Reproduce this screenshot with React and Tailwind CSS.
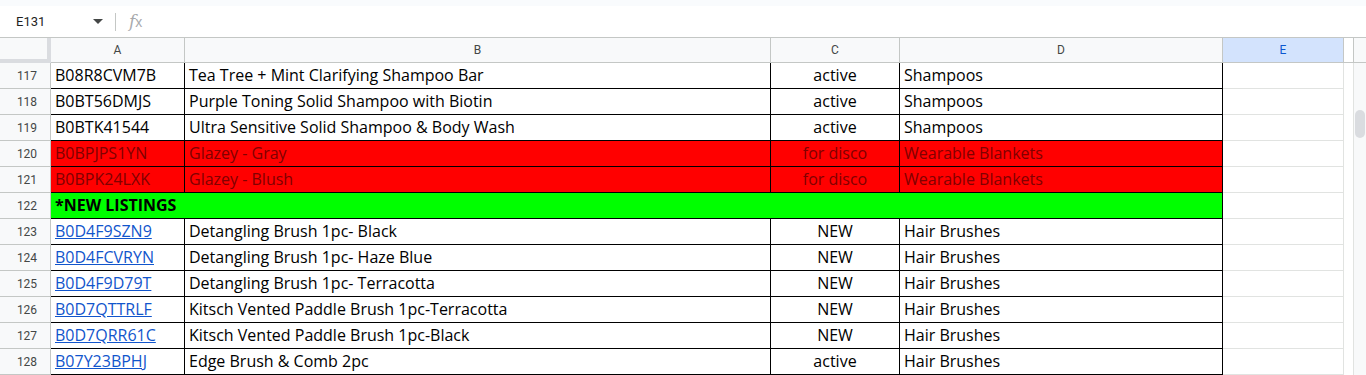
import React from "react";

const rows = [
  { n: 117, a: "B08R8CVM7B", b: "Tea Tree + Mint Clarifying Shampoo Bar", c: "active", d: "Shampoos" },
  { n: 118, a: "B0BT56DMJS", b: "Purple Toning Solid Shampoo with Biotin", c: "active", d: "Shampoos" },
  { n: 119, a: "B0BTK41544", b: "Ultra Sensitive Solid Shampoo & Body Wash", c: "active", d: "Shampoos" },
  { n: 120, a: "B0BPJPS1YN", b: "Glazey - Gray", c: "for disco", d: "Wearable Blankets", red: true },
  { n: 121, a: "B0BPK24LXK", b: "Glazey - Blush", c: "for disco", d: "Wearable Blankets", red: true },
  { n: 122, merged: "*NEW LISTINGS" },
  { n: 123, a: "B0D4F9SZN9", b: "Detangling Brush 1pc- Black", c: "NEW", d: "Hair Brushes", link: true },
  { n: 124, a: "B0D4FCVRYN", b: "Detangling Brush 1pc- Haze Blue", c: "NEW", d: "Hair Brushes", link: true },
  { n: 125, a: "B0D4F9D79T", b: "Detangling Brush 1pc- Terracotta", c: "NEW", d: "Hair Brushes", link: true },
  { n: 126, a: "B0D7QTTRLF", b: "Kitsch Vented Paddle Brush 1pc-Terracotta", c: "NEW", d: "Hair Brushes", link: true },
  { n: 127, a: "B0D7QRR61C", b: "Kitsch Vented Paddle Brush 1pc-Black", c: "NEW", d: "Hair Brushes", link: true },
  { n: 128, a: "B07Y23BPHJ", b: "Edge Brush & Comb 2pc", c: "active", d: "Hair Brushes", link: true },
];

const font = { fontFamily: '"Open Sans", "Noto Sans", sans-serif' };

function RowNum({ n }) {
  return (
    <div className="w-[51px] shrink-0 h-full flex items-center justify-center pl-[4px] border-r border-b border-[#c4c7c5] bg-[#f8f9fa] text-[12px] text-[#444746] font-['Roboto',sans-serif]">
      {n}
    </div>
  );
}

function Tail() {
  return (
    <>
      <div className="w-[121px] shrink-0 h-full border-r border-b border-[#e1e3e1] bg-white" />
      <div className="w-[10px] shrink-0 h-full border-r border-[#e1e3e1] bg-white" />
      <div className="flex-1 h-full bg-[#f8f9fa]" />
    </>
  );
}

export default function App() {
  return (
    <div className="w-[1366px] h-[375px] overflow-hidden bg-white relative" style={font}>
      <div className="h-[6px] bg-[#f9fbfd]" />
      <div className="h-[32px] flex items-center border-b border-[#c4c7c5] bg-white font-['Roboto',sans-serif]">
        <div className="w-[82px] pl-[16px] text-[13px] text-[#1f1f1f]">E131</div>
        <svg width="10" height="6" viewBox="0 0 10 6" className="ml-[11px]">
          <path d="M0 0 L10 0 L5 5 Z" fill="#444746" />
        </svg>
        <div className="ml-[12px] w-px h-[18px] bg-[#c4c7c5]" />
        <div className="ml-[13px] text-[17px] italic text-[#a8aaad] font-['DejaVu_Serif',serif] leading-none">
          <span>f</span><span className="text-[14px] not-italic font-['Liberation_Sans',sans-serif]">x</span>
        </div>
      </div>
      <div className="h-[25px] flex font-['Roboto',sans-serif] text-[12px] text-[#444746]">
        <div className="w-[51px] shrink-0 h-full bg-[#f8f9fa] border-r-[4px] border-b-[4px] border-[#dadce0]" />
        <div className="w-[134px] shrink-0 h-full flex items-center justify-center border-r border-b border-[#c4c7c5] bg-[#f8f9fa]">A</div>
        <div className="w-[586px] shrink-0 h-full flex items-center justify-center border-r border-b border-[#c4c7c5] bg-[#f8f9fa]">B</div>
        <div className="w-[129px] shrink-0 h-full flex items-center justify-center border-r border-b border-[#c4c7c5] bg-[#f8f9fa]">C</div>
        <div className="w-[323px] shrink-0 h-full flex items-center justify-center border-r border-b border-[#c4c7c5] bg-[#f8f9fa]">D</div>
        <div className="w-[121px] shrink-0 h-full flex items-center justify-center border-r border-b border-[#c4c7c5] bg-[#d3e3fd] text-[#0b57d0]">E</div>
        <div className="w-[10px] shrink-0 h-full border-r border-b border-[#c4c7c5] bg-white" />
        <div className="flex-1 h-full border-b border-[#c4c7c5] bg-[#f8f9fa]" />
      </div>
      {rows.map((r) => {
        if (r.merged) {
          return (
            <div key={r.n} className="h-[26px] flex">
              <RowNum n={r.n} />
              <div className="w-[1172px] shrink-0 h-full flex items-center pl-[4px] pb-[2px] border-r border-b border-black bg-[#00ff00] text-[16px] font-bold text-black">
                {r.merged}
              </div>
              <Tail />
            </div>
          );
        }
        const bg = r.red ? "bg-[#ff0000]" : "bg-white";
        const tc = r.red ? "text-[#800000]" : "text-black";
        return (
          <div key={r.n} className="h-[26px] flex text-[16px]">
            <RowNum n={r.n} />
            <div className={`w-[134px] shrink-0 h-full flex items-center pl-[4px] pb-[2px] border-r border-b border-black ${bg} ${tc}`}>
              {r.link ? <span className="text-[#1155cc] underline">{r.a}</span> : r.a}
            </div>
            <div className={`w-[586px] shrink-0 h-full flex items-center pl-[4px] pb-[2px] border-r border-b border-black ${bg} ${tc}`}>{r.b}</div>
            <div className={`w-[129px] shrink-0 h-full flex items-center justify-center pb-[2px] border-r border-b border-black ${bg} ${tc}`}>{r.c}</div>
            <div className={`w-[323px] shrink-0 h-full flex items-center pl-[4px] pb-[2px] border-r border-b border-black ${bg} ${tc}`}>{r.d}</div>
            <Tail />
          </div>
        );
      })}
      <div className="absolute left-[1355px] top-[110px] w-[10px] h-[28px] rounded-full bg-[#dadce0]" />
    </div>
  );
}
